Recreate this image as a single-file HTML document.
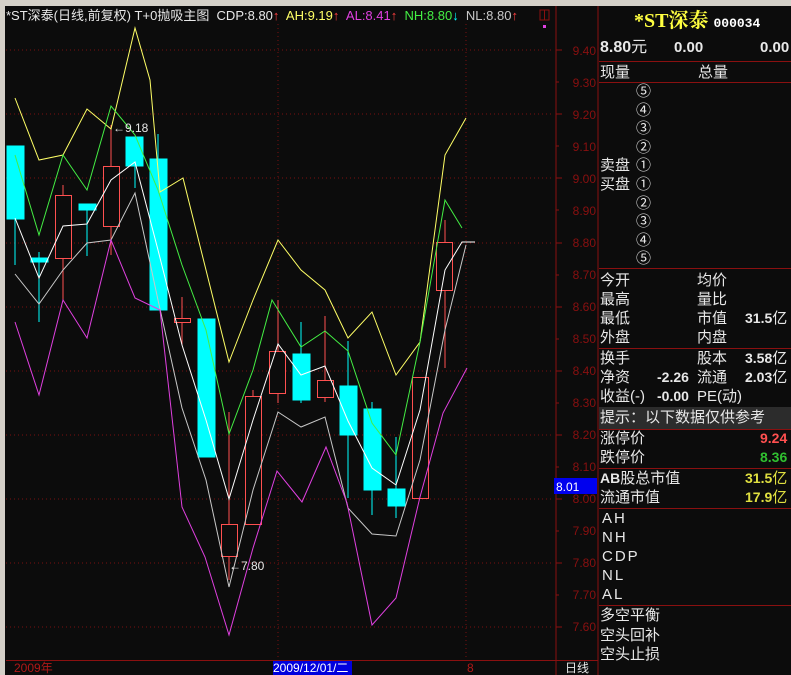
<!DOCTYPE html><html><head><meta charset="utf-8"><style>
body{margin:0;width:791px;height:675px;background:#0c0c0c;overflow:hidden;position:relative;font-family:"Liberation Sans","Noto Sans CJK SC",sans-serif;}
.t{position:absolute;white-space:nowrap;color:#e8e8e8;font-size:15px;line-height:19px;}
.h{position:absolute;left:599px;width:192px;height:1px;background:#8a1010;}
</style></head><body>
<div style="position:absolute;left:0;top:0;width:791px;height:6px;background:#d4d0c8"></div>
<div style="position:absolute;left:0;top:0;width:5px;height:675px;background:#d4d0c8"></div>
<svg style="position:absolute;left:0;top:0" width="791" height="675" xmlns="http://www.w3.org/2000/svg">
<g stroke="#7a1010" stroke-dasharray="1,3" stroke-width="1">
<line x1="6" y1="50" x2="554" y2="50"/><line x1="6" y1="114" x2="554" y2="114"/><line x1="6" y1="178" x2="554" y2="178"/><line x1="6" y1="243" x2="554" y2="243"/><line x1="6" y1="307" x2="554" y2="307"/><line x1="6" y1="371" x2="554" y2="371"/><line x1="6" y1="435" x2="554" y2="435"/><line x1="6" y1="499" x2="554" y2="499"/><line x1="6" y1="563" x2="554" y2="563"/><line x1="6" y1="627" x2="554" y2="627"/>
<line x1="278" y1="24" x2="278" y2="660"/><line x1="466" y1="24" x2="466" y2="660"/>
</g>
<g stroke="#8a1010" fill="none"><line x1="556" y1="6" x2="556" y2="675"/><line x1="598" y1="6" x2="598" y2="675"/><line x1="6" y1="660.5" x2="556" y2="660.5"/><line x1="556" y1="660.5" x2="598" y2="660.5"/>
<rect x="540" y="10" width="9" height="10"/><line x1="544.5" y1="10" x2="544.5" y2="20"/></g>
<g stroke="#8a1010"><line x1="556" y1="50" x2="562" y2="50"/><line x1="556" y1="82" x2="559" y2="82"/><line x1="556" y1="114" x2="562" y2="114"/><line x1="556" y1="146" x2="559" y2="146"/><line x1="556" y1="178" x2="562" y2="178"/><line x1="556" y1="210" x2="559" y2="210"/><line x1="556" y1="243" x2="562" y2="243"/><line x1="556" y1="275" x2="559" y2="275"/><line x1="556" y1="307" x2="562" y2="307"/><line x1="556" y1="339" x2="559" y2="339"/><line x1="556" y1="371" x2="562" y2="371"/><line x1="556" y1="403" x2="559" y2="403"/><line x1="556" y1="435" x2="562" y2="435"/><line x1="556" y1="467" x2="559" y2="467"/><line x1="556" y1="499" x2="562" y2="499"/><line x1="556" y1="531" x2="559" y2="531"/><line x1="556" y1="563" x2="562" y2="563"/><line x1="556" y1="595" x2="559" y2="595"/><line x1="556" y1="627" x2="562" y2="627"/></g>
<g font-family="Liberation Sans" font-size="12" fill="#8a1010" text-anchor="end">
<text x="596" y="55">9.40</text><text x="596" y="87">9.30</text><text x="596" y="119">9.20</text><text x="596" y="151">9.10</text><text x="596" y="183">9.00</text><text x="596" y="215">8.90</text><text x="596" y="247">8.80</text><text x="596" y="279">8.70</text><text x="596" y="311">8.60</text><text x="596" y="343">8.50</text><text x="596" y="375">8.40</text><text x="596" y="407">8.30</text><text x="596" y="439">8.20</text><text x="596" y="471">8.10</text><text x="596" y="503">8.00</text><text x="596" y="535">7.90</text><text x="596" y="567">7.80</text><text x="596" y="599">7.70</text><text x="596" y="631">7.60</text></g>
<rect x="554" y="478" width="43" height="16" fill="#0000ee"/><text x="556" y="491" font-family="Liberation Sans" font-size="12" fill="#fff">8.01</text>
<g fill="#00ffff" stroke="#00ffff">
<line x1="15" y1="146" x2="15" y2="265"/><rect x="7" y="146" width="17" height="73"/>
<line x1="39" y1="252" x2="39" y2="322"/><rect x="31" y="258" width="17" height="4"/>
<line x1="87" y1="204" x2="87" y2="256"/><rect x="79" y="204" width="17" height="6"/>
<line x1="135" y1="137" x2="135" y2="188"/><rect x="126" y="137" width="17" height="29"/>
<line x1="158" y1="134" x2="158" y2="310"/><rect x="150" y="159" width="17" height="151"/>
<rect x="198" y="319" width="17" height="138"/>
<line x1="301" y1="322" x2="301" y2="403"/><rect x="293" y="354" width="17" height="46"/>
<line x1="348" y1="341" x2="348" y2="498"/><rect x="340" y="386" width="17" height="49"/>
<line x1="372" y1="402" x2="372" y2="515"/><rect x="364" y="409" width="17" height="81"/>
<line x1="396" y1="437" x2="396" y2="518"/><rect x="388" y="489" width="17" height="17"/>
</g>
<g fill="none" stroke="#ff5050">
<line x1="63" y1="185" x2="63" y2="300"/><rect x="55.5" y="195.5" width="16" height="63" fill="#0c0c0c"/>
<line x1="111" y1="125" x2="111" y2="255"/><rect x="103.5" y="166.5" width="16" height="60" fill="#0c0c0c"/>
<line x1="182" y1="297" x2="182" y2="345"/><rect x="174.5" y="318.5" width="16" height="4" fill="#0c0c0c"/>
<line x1="229" y1="412" x2="229" y2="580"/><rect x="221.5" y="524.5" width="16" height="32" fill="#0c0c0c"/>
<line x1="253" y1="390" x2="253" y2="524"/><rect x="245.5" y="396.5" width="16" height="128" fill="#0c0c0c"/>
<line x1="278" y1="300" x2="278" y2="403"/><rect x="269.5" y="351.5" width="16" height="42" fill="#0c0c0c"/>
<line x1="325" y1="316" x2="325" y2="402"/><rect x="317.5" y="380.5" width="16" height="17" fill="#0c0c0c"/>
<rect x="412.5" y="377.5" width="16" height="121" fill="#0c0c0c"/>
<line x1="445" y1="220" x2="445" y2="368"/><rect x="436.5" y="242.5" width="16" height="48" fill="#0c0c0c"/>
</g>
<g fill="none" stroke-width="1">
<polyline stroke="#ffff66" points="15,98 39,160 63,155 87,109 111,129 135,28 150,80 160,192 183,178 229,362 253,300 278,240 301,270 325,290 348,338 372,312 396,375 420,342 445,155 466,118"/>
<polyline stroke="#44ee44" points="15,155 39,235 63,155 87,190 111,106 135,135 158,190 182,265 206,330 229,434 253,370 272,300 301,347 325,331 348,351 372,423 396,455 420,342 445,200 462,228"/>
<polyline stroke="#ffffff" points="15,218 39,278 63,226 87,224 111,180 135,162 158,250 182,345 206,420 229,499 253,420 278,344 301,375 325,366 348,421 372,468 396,485 420,410 445,270 462,242 475,242"/>
<polyline stroke="#c8c8c8" points="15,274 39,304 63,270 87,243 111,240 135,193 158,300 182,408 206,480 229,587 253,490 278,412 301,427 325,417 348,508 372,534 396,536 420,460 445,330 466,245"/>
<polyline stroke="#e040e0" points="15,322 39,395 63,300 87,338 111,240 135,298 160,310 182,507 205,557 229,635 253,548 277,471 302,502 326,447 347,503 372,625 396,598 420,497 443,413 467,368"/>
</g>
<g font-family="Liberation Sans" font-size="12" fill="#e8e8e8"><text x="113" y="132">←9.18</text><text x="229" y="570">←7.80</text></g>
<rect x="543" y="25" width="3" height="3" fill="#e040e0"/>
</svg>
<div class="t" style="left:6px;top:7px;font-size:13px;line-height:17px"><span>*ST深泰(日线,前复权) T+0抛吸主图&nbsp; CDP:8.80</span><span style="color:#ff4040">↑</span>&nbsp; <span style="color:#ffff66">AH:9.19</span><span style="color:#ff4040">↑</span>&nbsp; <span style="color:#e040e0">AL:8.41</span><span style="color:#ff4040">↑</span>&nbsp; <span style="color:#44ee44">NH:8.80</span><span style="color:#00ffff">↓</span>&nbsp; <span style="color:#c8c8c8">NL:8.80</span><span style="color:#ff4040">↑</span></div>
<div class="t" style="left:634px;top:9px;color:#ffff40;font-size:20px;line-height:24px;font-weight:bold;font-family:'Liberation Serif','Noto Serif CJK SC',serif">*ST深泰 <span style="font-family:'Liberation Mono',monospace;font-size:13px;color:#fff">000034</span></div>
<div class="t" style="left:600px;top:38px;font-weight:bold;font-size:16px">8.80<span style="font-weight:normal">元</span></div>
<div class="t" style="left:674px;top:38px;font-weight:bold;font-size:15px">0.00</div>
<div class="t" style="left:760px;top:38px;font-weight:bold;font-size:15px">0.00</div>
<div class="h" style="top:61px"></div>
<div class="t" style="left:600px;top:63px">现量</div><div class="t" style="left:698px;top:63px">总量</div>
<div class="h" style="top:82px"></div>
<div class="t" style="left:636px;top:83px;line-height:18.6px;font-size:15px">⑤<br>④<br>③<br>②<br>①<br>①<br>②<br>③<br>④<br>⑤</div>
<div class="t" style="left:600px;top:157px;line-height:18.6px">卖盘<br>买盘</div>
<div class="h" style="top:268px"></div>
<div class="t" style="left:600px;top:271px">今开<br>最高<br>最低<br>外盘</div>
<div class="t" style="left:697px;top:271px">均价<br>量比<br>市值<br>内盘</div>
<div class="t" style="left:745px;top:309px;font-weight:bold;font-size:14px">31.5<span style="font-weight:normal;font-size:15px">亿</span></div>
<div class="h" style="top:348px"></div>
<div class="t" style="left:600px;top:349px">换手<br>净资<br>收益(-)</div>
<div class="t" style="left:657px;top:368px;font-weight:bold;font-size:14px">-2.26</div>
<div class="t" style="left:657px;top:387px;font-weight:bold;font-size:14px">-0.00</div>
<div class="t" style="left:697px;top:349px">股本<br>流通<br>PE(动)</div>
<div class="t" style="left:745px;top:349px;font-weight:bold;font-size:14px;line-height:19px">3.58<span style="font-weight:normal;font-size:15px">亿</span><br>2.03<span style="font-weight:normal;font-size:15px">亿</span></div>
<div style="position:absolute;left:599px;top:407px;width:192px;height:22px;background:#2c2c2c"></div>
<div class="t" style="left:600px;top:408px">提示：以下数据仅供参考</div>
<div class="h" style="top:429px"></div>
<div class="t" style="left:600px;top:429px">涨停价<br>跌停价</div>
<div class="t" style="left:760px;top:429px;font-weight:bold;font-size:14px;color:#ff5050">9.24</div>
<div class="t" style="left:760px;top:448px;font-weight:bold;font-size:14px;color:#30c030">8.36</div>
<div class="h" style="top:468px"></div>
<div class="t" style="left:600px;top:469px"><b style="font-size:14px">AB</b>股总市值<br>流通市值</div>
<div class="t" style="left:745px;top:469px;font-weight:bold;font-size:14px;color:#e0e040;line-height:19px">31.5<span style="font-weight:normal;font-size:15px">亿</span><br>17.9<span style="font-weight:normal;font-size:15px">亿</span></div>
<div class="h" style="top:508px"></div>
<div class="t" style="left:602px;top:509px;line-height:19px;letter-spacing:2px;font-size:15px">AH<br>NH<br>CDP<br>NL<br>AL</div>
<div class="h" style="top:605px"></div>
<div class="t" style="left:600px;top:606px;line-height:19.5px">多空平衡<br>空头回补<br>空头止损</div>
<div class="t" style="left:14px;top:661px;font-size:12px;line-height:14px;color:#b01818">2009年</div>
<div class="t" style="left:273px;top:661px;width:79px;height:14px;background:#0000dd;color:#fff;font-size:12px;line-height:14px">2009/12/01/二</div>
<div class="t" style="left:467px;top:661px;font-size:12px;line-height:14px;color:#b01818">8</div>
<div class="t" style="left:565px;top:661px;font-size:12px;line-height:14px">日线</div>
</body></html>
